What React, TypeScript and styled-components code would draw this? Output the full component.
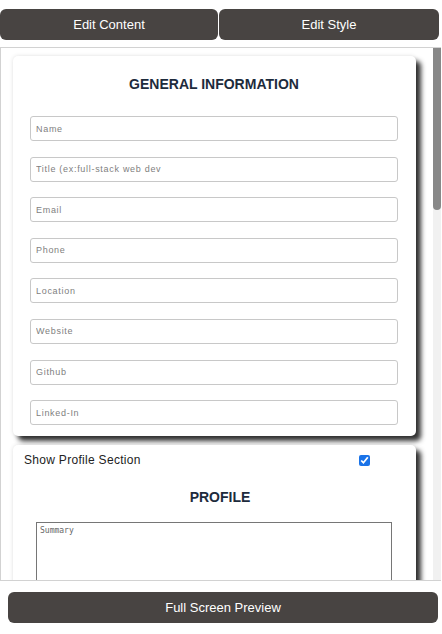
import React from "react";
import styled, { createGlobalStyle } from "styled-components";

const Global = createGlobalStyle`
  html, body { margin: 0; padding: 0; background: #fff; }
  body { font-family: "Liberation Sans", Arial, sans-serif; }
  * { box-sizing: border-box; }
`;

const Page = styled.div`
  width: 442px;
  height: 634px;
  padding-top: 9px;
  display: flex;
  flex-direction: column;
`;

const TopBar = styled.div`
  display: flex;
  gap: 1px;
  width: 439px;
`;

const DarkButton = styled.button<{ $grow?: number }>`
  flex: ${(p) => p.$grow ?? 1} 1 0;
  height: 31px;
  border: none;
  border-radius: 6px;
  background: #484442;
  color: #fff;
  font-family: "Liberation Sans", Arial, sans-serif;
  font-size: 13px;
  padding: 0;
  cursor: pointer;
`;

const Scroller = styled.div`
  margin-top: 7px;
  width: 441px;
  height: 534px;
  border: 1px solid #d2d2d2;
  border-right: none;
  display: flex;
  overflow: hidden;
`;

const Viewport = styled.div`
  flex: 1;
  overflow: hidden;
  padding: 8px 0 0 12px;
`;

const ScrollTrack = styled.div`
  width: 8px;
  flex: none;
  background: #f1f1f1;
`;

const Thumb = styled.div`
  height: 162px;
  background: #888;
  border-radius: 0 0 4px 4px;
`;

const Card = styled.section`
  width: 403px;
  background: #fff;
  border-radius: 5px;
  box-shadow: 0 0 4px rgba(0, 0, 0, 0.12), 5px 5px 5px #333;
  margin-bottom: 9px;
`;

const GeneralCard = styled(Card)`
  padding: 20px 18px 11px 17px;
`;

const Title = styled.h2<{ $top?: number }>`
  margin: ${(p) => p.$top ?? 0}px 0 0;
  text-align: center;
  font-size: 14px;
  line-height: 17px;
  font-weight: 700;
  color: #1d2b3c;
  font-family: "Liberation Sans", Arial, sans-serif;
`;

const Fields = styled.div`
  margin-top: 23px;
  display: grid;
  gap: 15.6px;
`;

const Field = styled.input`
  width: 368px;
  height: 25px;
  border: 1px solid #c8c8c8;
  border-radius: 3px;
  padding: 0 5px;
  font-family: "Liberation Sans", Arial, sans-serif;
  font-size: 9px;
  letter-spacing: 0.7px;
  color: #333;
  &::placeholder { color: #808080; }
`;

const SectionCard = styled(Card)`
  padding: 8px 0 20px 11px;
`;

const ToggleRow = styled.label`
  display: flex;
  align-items: center;
  width: 346px;
  justify-content: space-between;
  height: 14px;
  font-size: 12px;
  letter-spacing: 0.3px;
  color: #222;
`;

const Check = styled.input`
  margin: 0;
  width: 11px;
  height: 11px;
  accent-color: #1a73e8;
`;

const Summary = styled.textarea`
  display: block;
  margin: 16px 0 0 12px;
  width: 356px;
  height: 150px;
  border: 1px solid #767676;
  padding: 3px;
  resize: none;
  font-family: "DejaVu Sans Mono", "Liberation Mono", monospace;
  font-size: 8px;
  &::placeholder { color: #666; }
`;

const Footer = styled.div`
  padding: 11px 4px 0 8px;
  display: flex;
`;

const general = ["Name", "Title (ex:full-stack web dev", "Email", "Phone", "Location", "Website", "Github", "Linked-In"];

export default function App() {
  return (
    <Page>
      <Global />
      <TopBar>
        <DarkButton $grow={218}>Edit Content</DarkButton>
        <DarkButton $grow={220}>Edit Style</DarkButton>
      </TopBar>
      <Scroller>
        <Viewport>
          <GeneralCard>
            <Title>GENERAL INFORMATION</Title>
            <Fields>
              {general.map((g) => (
                <Field key={g} placeholder={g} />
              ))}
            </Fields>
          </GeneralCard>
          <SectionCard>
            <ToggleRow>
              <span>Show Profile Section</span>
              <Check type="checkbox" defaultChecked />
            </ToggleRow>
            <Title $top={22}>PROFILE</Title>
            <Summary placeholder="Summary" />
          </SectionCard>
        </Viewport>
        <ScrollTrack>
          <Thumb />
        </ScrollTrack>
      </Scroller>
      <Footer>
        <DarkButton>Full Screen Preview</DarkButton>
      </Footer>
    </Page>
  );
}
